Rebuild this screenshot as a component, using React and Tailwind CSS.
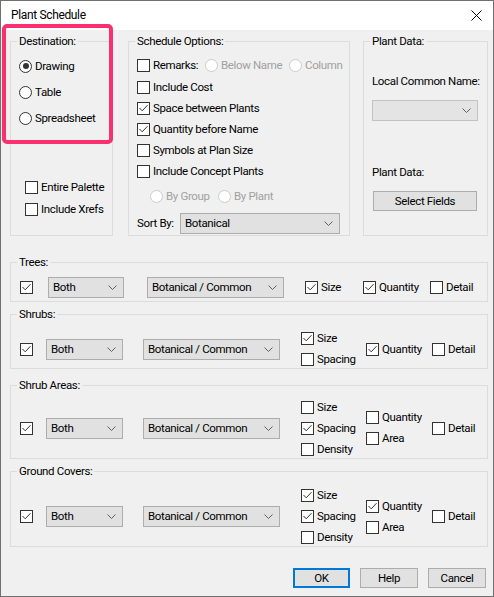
import React from "react";

const Check = ({ checked, className = "" }) => (
  <span className={`w-[13px] h-[13px] border border-[#333333] bg-white flex items-center justify-center shrink-0 ${className}`}>
    {checked && (
      <svg width="11" height="11" viewBox="0 0 11 11">
        <path d="M1.5 5 L4.2 7.8 L9.5 2.2" fill="none" stroke="#333333" strokeWidth="1" />
      </svg>
    )}
  </span>
);

const Radio = ({ checked, disabled }) => (
  <span
    className={`w-[13px] h-[13px] rounded-full border bg-white flex items-center justify-center shrink-0 ${
      disabled ? "border-[#cccccc]" : "border-[#333333]"
    }`}
  >
    {checked && <span className="w-[6px] h-[6px] rounded-full bg-[#333333]" />}
  </span>
);

const Chevron = () => (
  <svg width="9" height="5" viewBox="0 0 9 5" className="shrink-0">
    <path d="M0.5 0.5 L4.5 4.5 L8.5 0.5" fill="none" stroke="#606060" strokeWidth="1" />
  </svg>
);

const Select = ({ value, className = "", disabled }) => (
  <div
    className={`h-[21px] border flex items-center justify-between pl-[4px] pr-[6px] shrink-0 ${
      disabled ? "bg-[#e4e4e4] border-[#c3c3c3]" : "bg-[#e1e1e1] border-[#adadad]"
    } ${className}`}
  >
    <span>{value}</span>
    <Chevron />
  </div>
);

const CheckItem = ({ checked, label, className = "" }) => (
  <div className={`flex items-center gap-[3px] ${className}`}>
    <Check checked={checked} />
    <span>{label}</span>
  </div>
);

const RadioItem = ({ checked, disabled, label, className = "" }) => (
  <div className={`flex items-center gap-[3px] ${className}`}>
    <Radio checked={checked} disabled={disabled} />
    <span className={disabled ? "text-[#a0a0a0]" : ""}>{label}</span>
  </div>
);

const Group = ({ title, className = "", children }) => (
  <fieldset className={`border border-[#dcdcdc] ${className}`}>
    <legend className="ml-[6px] px-[2px] leading-[15px]">{title}</legend>
    {children}
  </fieldset>
);

const PlantRow = ({ trees }) => (
  <>
    <Check checked className="ml-[9px]" />
    <Select value="Both" className={trees ? "ml-[15px] w-[76px]" : "ml-[13px] w-[77px]"} />
    <Select value="Botanical / Common" className={trees ? "ml-[23px] w-[137px]" : "ml-[20px] w-[137px]"} />
  </>
);

export default function App() {
  return (
    <div className="w-[494px] h-[597px] bg-[#f0f0f0] border border-[#707070] relative font-['Roboto','Liberation_Sans',sans-serif] text-[11.5px] tracking-[-0.35px] leading-[15px] text-black whitespace-nowrap">
      {/* title bar */}
      <div className="h-[29px] bg-white flex items-center justify-between pl-[10px] pr-[10px]">
        <span className="text-[12px]">Plant Schedule</span>
        <svg width="11" height="11" viewBox="0 0 11 11" className="mr-[1px]">
          <path d="M0.5 0.5 L10.5 10.5 M10.5 0.5 L0.5 10.5" stroke="#000" strokeWidth="1" />
        </svg>
      </div>

      {/* top groups */}
      <div className="flex mt-[4px] ml-[9px]">
        <Group title="Destination:" className="w-[103px] h-[202px]">
          <div className="pl-[8px] pt-[4px]">
            <RadioItem checked label="Drawing" className="h-[26px]" />
            <RadioItem label="Table" className="h-[26px]" />
            <RadioItem label="Spreadsheet" className="h-[26px]" />
          </div>
          <div className="pl-[14px] mt-[45px]">
            <CheckItem label="Entire Palette" className="h-[22px]" />
            <CheckItem label="Include Xrefs" className="h-[22px]" />
          </div>
        </Group>

        <Group title="Schedule Options:" className="w-[222px] h-[202px] ml-[15px]">
          <div className="pl-[8px] pt-[5px]">
            <div className="flex items-center h-[23px]">
              <CheckItem label="Remarks:" className="w-[68px]" />
              <RadioItem disabled label="Below Name" className="w-[84px]" />
              <RadioItem disabled label="Column" />
            </div>
            <CheckItem label="Include Cost" className="h-[21px]" />
            <CheckItem checked label="Space between Plants" className="h-[21px]" />
            <CheckItem checked label="Quantity before Name" className="h-[21px]" />
            <CheckItem label="Symbols at Plan Size" className="h-[21px]" />
            <CheckItem label="Include Concept Plants" className="h-[21px]" />
            <div className="flex items-center h-[22px] mt-[3px] pl-[13px]">
              <RadioItem disabled label="By Group" className="w-[68px]" />
              <RadioItem disabled label="By Plant" />
            </div>
            <div className="flex items-center mt-[6px]">
              <span className="w-[43px]">Sort By:</span>
              <Select value="Botanical" className="w-[160px]" />
            </div>
          </div>
        </Group>

        <Group title="Plant Data:" className="w-[125px] h-[202px] ml-[13px]">
          <div className="pl-[8px]">
            <div className="mt-[25px]">Local Common Name:</div>
            <Select disabled value="" className="mt-[11px] w-[106px]" />
            <div className="mt-[44px]">Plant Data:</div>
            <div className="mt-[11px] ml-[1px] w-[104px] h-[20px] bg-[#e1e1e1] border border-[#adadad] flex items-center justify-center">
              Select Fields
            </div>
          </div>
        </Group>
      </div>

      {/* plant groups */}
      <div className="ml-[9px] w-[478px]">
        <Group title="Trees:" className="mt-[19px]">
          <div className="flex items-center h-[31px] pt-[3px]">
            <PlantRow trees />
            <CheckItem checked label="Size" className="ml-[21px] w-[58px]" />
            <CheckItem checked label="Quantity" className="w-[67px]" />
            <CheckItem label="Detail" />
          </div>
        </Group>

        <Group title="Shrubs:" className="mt-[5px]">
          <div className="flex items-center h-[46px] pt-[8px]">
            <PlantRow />
            <div className="ml-[21px] w-[65px]">
              <CheckItem checked label="Size" className="h-[21px]" />
              <CheckItem label="Spacing" className="h-[21px]" />
            </div>
            <CheckItem checked label="Quantity" className="w-[66px]" />
            <CheckItem label="Detail" />
          </div>
        </Group>

        <Group title="Shrub Areas:" className="mt-[9px]">
          <div className="flex items-center h-[65px] pt-[5px]">
            <PlantRow />
            <div className="ml-[21px] w-[65px]">
              <CheckItem label="Size" className="h-[21px]" />
              <CheckItem checked label="Spacing" className="h-[21px]" />
              <CheckItem label="Density" className="h-[21px]" />
            </div>
            <div className="w-[66px]">
              <CheckItem label="Quantity" className="h-[21px]" />
              <CheckItem label="Area" className="h-[21px]" />
            </div>
            <CheckItem label="Detail" />
          </div>
        </Group>

        <Group title="Ground Covers:" className="mt-[5px]">
          <div className="flex items-center h-[67px] pt-[8px]">
            <PlantRow />
            <div className="ml-[21px] w-[65px]">
              <CheckItem checked label="Size" className="h-[21px]" />
              <CheckItem checked label="Spacing" className="h-[21px]" />
              <CheckItem label="Density" className="h-[21px]" />
            </div>
            <div className="w-[66px]">
              <CheckItem checked label="Quantity" className="h-[21px]" />
              <CheckItem label="Area" className="h-[21px]" />
            </div>
            <CheckItem label="Detail" />
          </div>
        </Group>
      </div>

      {/* buttons */}
      <div className="flex justify-end gap-[10px] pr-[7px] mt-[21px]">
        <div className="w-[57px] h-[20px] bg-[#e1e1e1] border-2 border-[#0078d7] flex items-center justify-center">OK</div>
        <div className="w-[58px] h-[20px] bg-[#e1e1e1] border border-[#adadad] flex items-center justify-center">Help</div>
        <div className="w-[58px] h-[20px] bg-[#e1e1e1] border border-[#adadad] flex items-center justify-center">Cancel</div>
      </div>

      {/* highlight annotation */}
      <div className="absolute left-[1px] top-[23px] w-[111px] h-[120px] border-[4px] border-[#fc2f70] rounded-[5px] pointer-events-none" />
    </div>
  );
}
